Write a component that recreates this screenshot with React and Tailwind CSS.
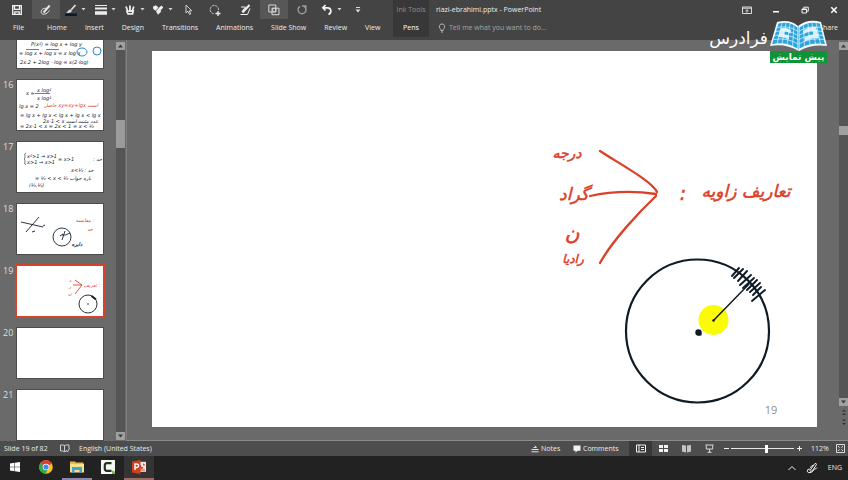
import { useState } from "react";
import clsx from "clsx";

const tabs = ["File", "Home", "Insert", "Design", "Transitions", "Animations", "Slide Show", "Review", "View"];

function Caret() {
  return (
    <svg viewBox="0 0 5 3" className="w-[5px] h-[3px]" fill="#d4d4d4">
      <path d="M.5 0h4L2.500 2.500z" />
    </svg>
  );
}

function SaveIcon() {
  return (
    <svg viewBox="0 0 12 12" className="w-3 h-3" fill="none" stroke="#f2f2f2" strokeWidth="1.3">
      <path d="M1.7 1.7h8.6v8.6H1.7z M3.5 1.7v3.6h5V1.7 M3.8 10.3V7.8h4.4v2.5" />
    </svg>
  );
}

function InkPenIcon() {
  return (
    <svg viewBox="0 0 12 12" className="w-3 h-3" fill="none" stroke="#e6e6e6">
      <path d="M3.5 8.5L9.7 1.5" strokeWidth="2" />
      <path d="M7.5 4.5C3 3.500 .8 6 1.2 8.300C2 11.500 7 10.500 9.500 6.500" strokeWidth="1" />
    </svg>
  );
}

function PenColorIcon() {
  return (
    <svg viewBox="0 0 12 12" className="w-3 h-3">
      <path d="M1 8.500C3 8 3 6 5 5.500L7 7C6 9 3 9.500 1 8.500z" fill="#dcdcdc" />
      <path d="M6 6L10.500 1" stroke="#dcdcdc" strokeWidth="1.800" />
      <path d="M0 9.500h12V12H0z" fill="#0b1b26" />
    </svg>
  );
}

function ThicknessIcon() {
  return (
    <svg viewBox="0 0 12 12" className="w-3 h-3" fill="#ededed">
      <path d="M0 1h12v1H0z M0 3.500h12v2H0z M0 7.300h12v3.500H0z" />
    </svg>
  );
}

function PensIcon() {
  return (
    <svg viewBox="0 0 12 12" className="w-3 h-3" fill="none" stroke="#ededed">
      <path d="M2 2.500L4 8 M6 1.500V8 M9.800 2.500L8 8" strokeWidth="1.800" />
      <path d="M2.500 6.500L4 9.800h4.500L9.500 6 M4.500 7h3.500" strokeWidth="1.800" />
    </svg>
  );
}

function EraserIcon() {
  return (
    <svg viewBox="0 0 12 12" className="w-3 h-3" fill="#ededed">
      <path d="M1 2.500L4 1.200l2.300 2.300L3.800 6.800 1.200 5z M6.500 4L9.500 1.500l1.800 2L8.200 7z M4 7.200l2.500-3 2.800 3.300-3.300 3.300z" />
    </svg>
  );
}

function CursorIcon() {
  return (
    <svg viewBox="0 0 12 12" className="w-3 h-3" fill="none" stroke="#d0d0d0">
      <path d="M4 1v8l2-1.800 1.500 3.300 1.300-.6L7.300 6.800h2.500z" />
    </svg>
  );
}

function LassoIcon() {
  return (
    <svg viewBox="0 0 12 12" className="w-3 h-3" fill="none" stroke="#c8c8c8">
      <path d="M9.500 6A4.200 4.200 0 1 0 5 9.800" strokeDasharray="2.500 .8" />
      <path d="M9 7v5 M6.500 9.500h5" stroke="#f2f2f2" strokeWidth="1.300" />
    </svg>
  );
}

function InkToTextIcon() {
  return (
    <svg viewBox="0 0 12 12" className="w-3 h-3" fill="none" stroke="#f2f2f2">
      <path d="M3.500 8.500L10.500 1" strokeWidth="2" />
      <path d="M2 3h4.500L3 7.500M1.500 10.500h7L11 4.500" strokeWidth="1" />
    </svg>
  );
}

function ShapesIcon() {
  return (
    <svg viewBox="0 0 12 12" className="w-3 h-3" fill="none" stroke="#d8d8d8">
      <path d="M.8 1h7v7h-7z M4 4.200h7v6.500H4z" />
      <circle cx="6.300" cy="6" r="1.800" />
    </svg>
  );
}

function RedoIcon() {
  return (
    <svg viewBox="0 0 12 12" className="w-3 h-3" fill="none" stroke="#9c9c9c" strokeWidth="1.400">
      <path d="M4 2.300A4 4 0 1 0 8.500 2.600 M6 2h3.800v3.500" />
    </svg>
  );
}

function UndoIcon() {
  return (
    <svg viewBox="0 0 12 12" className="w-3 h-3" fill="none" stroke="#f5f5f5" strokeWidth="1.700">
      <path d="M4.500 1L1.800 3.800l2.700 2.700 M2 3.800h4.500c4 0 4.500 5 1 6.700" />
    </svg>
  );
}

function CustomizeIcon() {
  return (
    <svg viewBox="0 0 6 6" className="w-1.5 h-1.5" fill="#dcdcdc">
      <path d="M1 0h4v1H1z M.5 2.500h5L3 5.500z" />
    </svg>
  );
}

const quickTools = [
  { name: "Save", icon: SaveIcon, width: "w-[30px]" },
  { name: "Draw", icon: InkPenIcon, width: "w-7", active: true },
  { name: "Pen color", icon: PenColorIcon, width: "w-[30px]", menu: true },
  { name: "Thickness", icon: ThicknessIcon, width: "w-[30px]", menu: true },
  { name: "Pens", icon: PensIcon, width: "w-7", menu: true },
  { name: "Eraser", icon: EraserIcon, width: "w-7", menu: true },
  { name: "Select objects", icon: CursorIcon, width: "w-6" },
  { name: "Lasso select", icon: LassoIcon, width: "w-[30px]" },
  { name: "Ink to text", icon: InkToTextIcon, width: "w-[30px]" },
  { name: "Convert to shapes", icon: ShapesIcon, width: "w-7", active: true },
  { name: "Redo", icon: RedoIcon, width: "w-7" },
  { name: "Undo", icon: UndoIcon, width: "w-[30px]", menu: true },
  { name: "Customize toolbar", icon: CustomizeIcon, width: "w-6" },
];

function WindowControls() {
  const cell = "w-[29px] h-full flex items-center justify-center";
  return (
    <div className="ml-auto flex h-full">
      <button aria-label="Ribbon display options" className={cell}>
        <svg viewBox="0 0 10 8" className="w-[10px] h-2" fill="none" stroke="#dcdcdc">
          <path d="M.5 1h9v6.500h-9z M.5 2.200h9 M5 6.500V4 M3.500 5L5 3.700 6.500 5" />
        </svg>
      </button>
      <button aria-label="Minimize" className={cell}>
        <svg viewBox="0 0 8 8" className="w-2 h-2" fill="#fff">
          <path d="M1 5h6v1.500H1z" />
        </svg>
      </button>
      <button aria-label="Restore" className={cell}>
        <svg viewBox="0 0 8 8" className="w-2 h-2" fill="none" stroke="#f0f0f0">
          <path d="M1 3h4.500v4H1z M2.800 3V1.200h4.500v4H5.500 M1 3.500h4.500" />
        </svg>
      </button>
      <button aria-label="Close" className={cell}>
        <svg viewBox="0 0 8 8" className="w-2 h-2" stroke="#fff" strokeWidth="1.600">
          <path d="M1.300 1.300l5.400 5.400M6.700 1.300L1.300 6.700" />
        </svg>
      </button>
    </div>
  );
}

function Brand() {
  return (
    <div className="absolute right-[21px] top-5 flex items-start gap-0.5">
      <span className="text-[17px] leading-9 text-white font-['DejaVu_Sans',sans-serif]" dir="rtl">
        فرادرس
      </span>
      <div className="w-[57px]">
        <svg viewBox="0 0 57 31" className="w-full block">
          <path d="M7 2Q20-1 28 6Q38-2 51 2L57 26Q42 24 29 31Q15 23 0 26z" fill="#f4fbff" />
          <path d="M8.500 3.500Q20 1 27.500 7.500V28.500Q15 21 2 24.300z" fill="#2ba4dc" />
          <path d="M29.500 7.500Q38 1 49.800 3.500L55 24.300Q42 21.500 29.500 28.500z" fill="#2ba4dc" />
          <g fill="#d9f0fb">
            <path d="M11 8q5-1 10 2l-.5 3.500q-4-2.500-6-2l-.5 3q3 0 5 1.500v3.500q-5-3-11-2.500z" />
            <path d="M33 11q5-4.500 13-4l3 11q-8-.5-14 3.500l-.5-4q4-2.500 9-3l-1-3.500q-5 0-9 3.500z" />
          </g>
          <g fill="none" stroke="#e6f6fd" strokeWidth=".7">
            <path d="M7 7.500Q19 5 28 11.500M6 11.500Q18 9 28 15.500M5 15.500Q17 13 28 19.500M4 19.500Q16 17 28 24" />
            <path d="M29 11.500Q38 5 51 7.500M29 15.500Q39 9 52 11.500M29 19.500Q40 13 53 15.500M29 24Q41 17 54 19.500" />
            <path d="M12 3L7 24M16 3L12 24M20 4L17 25M24 5.500L22.500 27" />
            <path d="M46 3L50.500 24M42 3L45.500 24M38 4L40 25M33.500 5.500L34.500 27" />
          </g>
          <path d="M28.500 6v24" stroke="#8acbea" />
        </svg>
        <p
          className="bg-[#0d9438] text-white text-center font-bold text-[9px] leading-3 whitespace-nowrap font-['DejaVu_Sans',sans-serif]"
          dir="rtl"
        >
          پیش نمایش
        </p>
      </div>
    </div>
  );
}

function Header() {
  return (
    <header className="relative z-10 flex bg-[#444444] h-10 shrink-0">
      <div className="w-[393px] shrink-0">
        <div className="flex h-[19px] pl-0.5">
          {quickTools.map(({ name, icon: Icon, width, active, menu }) => (
            <button
              key={name}
              aria-label={name}
              className={clsx("flex items-center justify-center gap-1 h-full", width, active && "bg-[#575757]")}
            >
              <Icon />
              {menu && <Caret />}
            </button>
          ))}
        </div>
        <nav className="flex h-[18px] pl-1">
          {tabs.map((tab) => (
            <button key={tab} className="px-[9px] first:pr-[14px] whitespace-nowrap">
              {tab}
            </button>
          ))}
        </nav>
      </div>

      <div className="w-9 h-[37px] shrink-0 bg-[#383838] flex flex-col">
        <span className="h-[19px] leading-[19px] text-center text-[#8f8f8f] whitespace-nowrap">Ink Tools</span>
        <button className="h-[18px] text-white">Pens</button>
      </div>

      <div className="flex-1 min-w-0">
        <div className="flex items-center h-[19px] pl-[7px]">
          <h1 className="whitespace-nowrap">riazi-ebrahimi.pptx - PowerPoint</h1>
          <WindowControls />
        </div>
        <div className="flex items-center h-[18px] pl-[9px] pr-[10px]">
          <label className="flex flex-1 items-center gap-[3px]">
            <svg viewBox="0 0 8 10" className="w-2 h-[10px]" fill="none" stroke="#b8b8b8">
              <path d="M2.800 6.500C.5 4.500 1 1 4 1s3.500 3.500 1.200 5.500v1H2.800z M3 9h2" />
            </svg>
            <input
              aria-label="Tell me what you want to do"
              placeholder="Tell me what you want to do..."
              className="w-28 bg-transparent outline-none placeholder:text-[#a4a4a4]"
            />
          </label>
          <button>Share</button>
        </div>
      </div>

      <Brand />
    </header>
  );
}

const inkText = "font-['DejaVu_Sans',sans-serif] italic";

function LogSlide() {
  return (
    <g className={inkText} fill="#15202c" fontSize="5">
      <text x="14" y="28">P(x²) = log x + log y</text>
      <text x="2" y="37">= log x + log x = x log x</text>
      <text x="3" y="46">2x.2 + 2log - log = x(2-log)</text>
      <g fill="none" stroke="#2d86c9">
        <ellipse cx="65" cy="34" rx="5" ry="4" />
        <ellipse cx="80" cy="33" rx="4" ry="4" />
        <path d="M9 31.500h13M29 31.500h13" stroke="#15202c" strokeWidth=".6" />
      </g>
    </g>
  );
}

function FractionSlide() {
  return (
    <g className={inkText} fill="#15202c" fontSize="5">
      <text x="9" y="15">x =</text>
      <text x="20" y="12">x log²</text>
      <text x="20" y="20">x log²</text>
      <path d="M18 13.500h15" stroke="#15202c" strokeWidth=".6" />
      <text x="2" y="28">lg x = 2</text>
      <text x="54" y="27" fill="#e0412f" textAnchor="middle">حاصل xy=xy+lgx است</text>
      <text x="3" y="37">= lg x + lg x &lt; lg x + lg x &lt; lg x</text>
      <text x="26" y="43">2x-1 &lt; x عدد مثبت است</text>
      <text x="3" y="48">= 2x-1 &lt; x = 2x &lt; 1 = x &lt; ½</text>
    </g>
  );
}

function SystemSlide() {
  return (
    <g className={inkText} fill="#15202c" fontSize="5">
      <text x="10" y="16">x²&gt;1 → x&gt;1</text>
      <text x="10" y="22">x&gt;1 → x&gt;1</text>
      <path d="M9 11q-2 0-1 4q0 2-1 2q1 0 1 2q-1 4 1 4" fill="none" stroke="#15202c" strokeWidth=".6" />
      <text x="41" y="19">= x&gt;1</text>
      <text x="76" y="19">: حد</text>
      <text x="54" y="30">x&lt;½ : حد</text>
      <text x="18" y="38">= ½ &lt; x &lt; ½ بازه جواب</text>
      <text x="12" y="45">(½,½)</text>
    </g>
  );
}

function CompareSlide() {
  return (
    <g fill="none" stroke="#15202c" strokeWidth=".9">
      <path d="M4 18L26 23 M22 13L9 28 M26 22l2-1 M15 28l3-1" />
      <circle cx="45" cy="33" r="9" />
      <path d="M45 36L48 27 M45 31q3 1 8-2 M43 32l3-2" />
      <g className={inkText} stroke="none" fontSize="5">
        <text x="60" y="42" fill="#15202c" textAnchor="middle" fontWeight="bold">دایره</text>
        <text x="68" y="18" fill="#e0412f" textAnchor="middle">مقایسه :</text>
        <text x="73" y="27" fill="#e0412f" textAnchor="middle">حد</text>
      </g>
    </g>
  );
}

function AngleThumb() {
  return (
    <g fill="none" strokeWidth=".9">
      <path d="M58 14L65 19L58 28M56 19h9" stroke="#e0412f" />
      <g className={inkText} fill="#e0412f" fontSize="5">
        <text x="53" y="16" textAnchor="middle">د</text>
        <text x="53" y="22" textAnchor="middle">ر</text>
        <text x="53" y="29" textAnchor="middle">ن</text>
        <text x="75" y="21" textAnchor="middle">تعریف :</text>
      </g>
      <circle cx="71" cy="38" r="9" stroke="#15202c" />
      <path d="M74.500 30L79 33.500" stroke="#15202c" strokeWidth="2" />
      <circle cx="71" cy="38" r=".8" fill="#15202c" />
    </g>
  );
}

const slides = [
  { no: 15, content: LogSlide },
  { no: 16, content: FractionSlide },
  { no: 17, content: SystemSlide },
  { no: 18, content: CompareSlide },
  { no: 19, content: AngleThumb },
  { no: 20 },
  { no: 21 },
];

function ArrowButton({ label, path }) {
  return (
    <button aria-label={label} className="w-[9px] h-2 bg-[#a0a0a0] flex items-center justify-center">
      <svg viewBox="0 0 5 4" className="w-[5px] h-1" fill="#3a3a3a">
        <path d={path} />
      </svg>
    </button>
  );
}

const up = "M0 3.500h5L2.500 .5z";
const down = "M0 .5h5L2.500 3.500z";

function SlidePanel({ current, onSelect }) {
  return (
    <aside className="flex shrink-0 border-r border-[#808080]">
      <ol className="w-[116px] pl-[3px] pb-px flex flex-col justify-end gap-3 overflow-hidden">
        {slides.map(({ no, content: Content }) => (
          <li key={no} className="shrink-0">
            <button onClick={() => onSelect(no)} className="flex text-left">
              <span className="w-3.5 text-[9px] leading-[9px] text-[#dedede]">{no}</span>
              <span
                className={clsx(
                  "w-[86px] h-[50px] bg-white outline",
                  no === current ? "outline-2 outline-[#d5432b]" : "outline-1 outline-[#4c4c4c]"
                )}
              >
                <svg viewBox="0 0 86 50" className="w-full h-full block">
                  {Content && <Content />}
                </svg>
              </span>
            </button>
          </li>
        ))}
      </ol>
      <div className="flex flex-col pt-0.5 pb-px pr-px">
        <ArrowButton label="Scroll up" path={up} />
        <div className="flex-1 bg-[#555555] flex flex-col">
          <div className="grow-[70]" />
          <div className="h-7 bg-[#9b9b9b]" />
          <div className="grow-[284]" />
        </div>
        <ArrowButton label="Scroll down" path={down} />
      </div>
    </aside>
  );
}

const ticks = [
  "M580 225L587 217",
  "M582 227L591 218",
  "M586 230L595 220",
  "M588 234L599 224",
  "M591 237L602 227",
  "M595 239L605 229",
  "M598 241L608 232",
  "M601 244L609 236",
  "M600 250L613 239",
];

function AngleSlide() {
  return (
    <svg viewBox="0 0 665 376" className="w-full h-full block" role="img" aria-label="Slide 19">
      <g fill="none" stroke="#dc4029" strokeWidth="2.300" strokeLinecap="round">
        <path d="M448 100C466 112 500 130 505 141" />
        <path d="M438 145Q470 138 504 143" />
        <path d="M504 145C488 160 460 190 448 212" />
      </g>
      <g className={inkText} fill="#dc4029" stroke="#dc4029" strokeWidth=".5" textAnchor="middle">
        <text x="415" y="107" fontSize="14">درجه</text>
        <text x="422" y="149" fontSize="17">گراد</text>
        <text x="420" y="189" fontSize="20">ن</text>
        <text x="421" y="212" fontSize="12">رادیا</text>
        <text x="594" y="146" fontSize="17">تعاریف زاویه</text>
        <text x="531" y="149" fontSize="19">:</text>
      </g>

      <circle cx="561.500" cy="269" r="15" fill="#fbfb05" />
      <g fill="none" stroke="#0f1b24" strokeLinecap="round">
        <circle cx="545.500" cy="280" r="71.500" strokeWidth="2.200" />
        <path d="M561.500 269.500L597 233" strokeWidth="1.500" />
        {ticks.map((d) => (
          <path key={d} d={d} strokeWidth="1.900" />
        ))}
      </g>
      <circle cx="546.500" cy="281.500" r="3.200" fill="#0f1b24" />
      <path d="M546 284.500h3.500v-3z" fill="#0f1b24" />
      <circle cx="561.500" cy="269.500" r="1.200" fill="#0f1b24" />
      <text x="619" y="363" textAnchor="middle" fontSize="11" fill="#8c8c8c" className="font-['Open_Sans',sans-serif]">
        19
      </text>
    </svg>
  );
}

function SlideArea() {
  return (
    <main className="flex flex-1 min-w-0 border-b border-[#8a8a8a]">
      <div className="flex-1 min-w-0 pl-[25px] pr-[22px] pt-[11px] pb-[13px]">
        <div className="h-full bg-white">
          <AngleSlide />
        </div>
      </div>
      <div className="flex flex-col pt-0.5">
        <ArrowButton label="Previous page" path={up} />
        <div className="flex-1 bg-[#555555] flex flex-col">
          <div className="grow-[76]" />
          <div className="h-[9px] bg-[#a0a0a0]" />
          <div className="grow-[262]" />
        </div>
        <ArrowButton label="Next page" path={down} />
        <div className="flex flex-col items-center gap-0.5 pt-0.5 pb-[14px]">
          <button aria-label="Previous slide">
            <svg viewBox="0 0 6 8" className="w-1.5 h-2 block" fill="#303030">
              <path d="M1 3.500l2-2 2 2z M1 7l2-2 2 2z" />
            </svg>
          </button>
          <button aria-label="Next slide">
            <svg viewBox="0 0 6 8" className="w-1.5 h-2 block" fill="#303030">
              <path d="M1 1.500l2 2 2-2z M1 5l2 2 2-2z" />
            </svg>
          </button>
        </div>
      </div>
    </main>
  );
}

function StatusBar({ current, zoom, onZoom }) {
  const view = "w-[23px] h-full flex items-center justify-center";
  return (
    <footer className="flex items-center h-[15px] shrink-0 bg-[#4d4d4d] pl-1 pr-[3px] whitespace-nowrap">
      <span className="w-14">Slide {current} of 82</span>
      <button aria-label="Spelling" className="w-[19px]">
        <svg viewBox="0 0 10 9" className="w-[10px] h-[9px]" fill="none" stroke="#cfcfcf">
          <path d="M4.500 1.500Q2.500.5.5 1v6q2-.5 4 .7zM4.500 1.500Q7 .5 9 1v3M4.500 7.700l1.500-.5M6 6l1.500 2L9.500 4" />
        </svg>
      </button>
      <button>English (United States)</button>

      <div className="ml-auto flex items-center h-full">
        <button className="flex items-center gap-0.5 w-[42px]">
          <svg viewBox="0 0 8 8" className="w-2 h-2" fill="none" stroke="#e0e0e0">
            <path d="M.5 4.500h7M.5 6.800h7M2.500 2.500h3M4 .8L5.500 2.500" />
          </svg>
          Notes
        </button>
        <button className="flex items-center gap-0.5 w-14">
          <svg viewBox="0 0 8 8" className="w-2 h-2" fill="#f2f2f2">
            <path d="M.5.5h7v5.200H4.500L2.500 7.800V5.700h-2z" />
          </svg>
          Comments
        </button>
        <button aria-label="Normal view" className={clsx(view, "bg-[#383838]")}>
          <svg viewBox="0 0 10 9" className="w-[10px] h-[9px]" fill="none" stroke="#f2f2f2">
            <path d="M.5 1h9v7h-9z M3 1v7 M5 3.500h3 M5 5.500h3" />
          </svg>
        </button>
        <button aria-label="Slide sorter" className={view}>
          <svg viewBox="0 0 9 9" className="w-[9px] h-[9px]" fill="#f2f2f2">
            <path d="M0 1h4v3H0zM5 1h4v3H5zM0 5h4v3H0zM5 5h4v3H5z" />
          </svg>
        </button>
        <button aria-label="Reading view" className={view}>
          <svg viewBox="0 0 9 9" className="w-[9px] h-[9px]" fill="#c4c4c4">
            <path d="M0 1l4 .6V8.500L0 7.500zM5 1.600L9 1v6.500L5 8.500z" />
          </svg>
        </button>
        <button aria-label="Slide show" className={view}>
          <svg viewBox="0 0 9 9" className="w-[9px] h-[9px]" fill="none" stroke="#dadada">
            <path d="M.3 1h8.400M1.300 1.500v3.500h6.400V1.500M4.500 5v3M2.500 8.300h4" />
          </svg>
        </button>
        <button aria-label="Zoom out" className="w-2.5 flex items-center justify-center">
          <svg viewBox="0 0 5 5" className="w-[5px] h-[5px]" stroke="#f2f2f2">
            <path d="M0 2.500h5" />
          </svg>
        </button>
        <input
          type="range"
          aria-label="Zoom"
          min="10"
          max="190"
          value={zoom}
          onChange={(e) => onZoom(Number(e.target.value))}
          className="w-[63px] h-px appearance-none bg-[#e6e6e6] [&::-webkit-slider-thumb]:appearance-none [&::-webkit-slider-thumb]:w-[3px] [&::-webkit-slider-thumb]:h-2 [&::-webkit-slider-thumb]:bg-white"
        />
        <button aria-label="Zoom in" className="w-2.5 flex items-center justify-center">
          <svg viewBox="0 0 5 5" className="w-[5px] h-[5px]" stroke="#f2f2f2">
            <path d="M0 2.500h5M2.500 0v5" />
          </svg>
        </button>
        <span className="w-8 text-center">{zoom}%</span>
        <button aria-label="Fit to window">
          <svg viewBox="0 0 9 9" className="w-[9px] h-[9px] block" fill="none" stroke="#dadada">
            <path d="M.5.5h8v8h-8z M2 2l1.700 1.700M7 2L5.300 3.700M2 7l1.700-1.700M7 7L5.300 5.300" />
          </svg>
        </button>
      </div>
    </footer>
  );
}

function Taskbar() {
  const item = "w-[30px] h-full flex items-center justify-center border-b-2";
  return (
    <div className="flex items-center h-6 shrink-0 bg-[#222222]">
      <div className="flex h-full gap-px">
        <button aria-label="Start" className={clsx(item, "border-transparent")}>
          <svg viewBox="0 0 10 10" className="w-[10px] h-[10px]" fill="#fff">
            <path d="M0 1.400L4.500.8v4H0zM5 .7L10 0v4.800H5zM0 5.300h4.500v4L0 8.600zM5 5.300h5V10l-5-.7z" />
          </svg>
        </button>
        <button aria-label="Chrome" className={clsx(item, "border-transparent")}>
          <svg viewBox="0 0 14 14" className="w-3.5 h-3.5">
            <circle cx="7" cy="7" r="6.800" fill="#fbc116" />
            <path d="M7 7L1.100 3.600A6.800 6.800 0 0 1 12.900 3.600z" fill="#e33b2e" />
            <path d="M7 7L1.100 3.600A6.800 6.800 0 0 0 6.300 13.800L9.500 8.500z" fill="#2da94f" />
            <circle cx="7" cy="7" r="3.300" fill="#fff" />
            <circle cx="7" cy="7" r="2.600" fill="#4285f4" />
          </svg>
        </button>
        <button aria-label="File Explorer" className={clsx(item, "border-[#8d86a8]")}>
          <svg viewBox="0 0 14 12" className="w-3.5 h-3">
            <path d="M0 .5h5l1 1h7.500V11H0z" fill="#e8b84a" />
            <path d="M0 3h14v8.500H0z" fill="#fbe08a" />
            <path d="M2 6h10v5.500H9.500V9h-5v2.500H2z" fill="#3fa7d8" />
          </svg>
        </button>
        <button aria-label="Camtasia" className={clsx(item, "border-transparent")}>
          <svg viewBox="0 0 14 14" className="w-3.5 h-3.5">
            <path d="M0 0h14v14H0z" fill="#f5f8f2" />
            <path d="M10.500 3.200H6Q3.800 3.200 3.800 5.500v3Q3.800 10.800 6 10.800h4.500" fill="none" stroke="#22311d" strokeWidth="2.200" />
            <path d="M11 10.500l3 1V14h-3z" fill="#7fb94a" />
          </svg>
        </button>
        <button aria-label="PowerPoint" className={clsx(item, "bg-[#343434] border-[#9c6b63]")}>
          <svg viewBox="0 0 14 14" className="w-3.5 h-3.5">
            <path d="M7 1.800h7v10H7z" fill="#f8e6e0" />
            <path d="M9 5a2 2 0 1 0 2.500 2H9.500z M8 9.500h5v1H8z M11 3.500a2 2 0 0 1 2 2h-2z" fill="#d34a2c" />
            <path d="M0 1.500L8.500 0v14L0 12.500z" fill="#d0401f" />
            <path d="M3 10V4h1.800a1.700 1.700 0 0 1 0 3.500H3" fill="none" stroke="#fff" strokeWidth="1.400" />
          </svg>
        </button>
      </div>
      <div className="ml-auto flex items-center gap-2.5 pr-1.5">
        <button aria-label="Show hidden icons">
          <svg viewBox="0 0 8 6" className="w-2 h-1.5 block" fill="none" stroke="#f0f0f0">
            <path d="M.5 5L4 1.500 7.500 5" />
          </svg>
        </button>
        <button aria-label="Windows Ink Workspace">
          <svg viewBox="0 0 12 12" className="w-3 h-3 block" fill="none" stroke="#f0f0f0">
            <path d="M4 8.500L8.500 2q2-1.500 2 .5L6.500 8.500 4.500 9.500z M7 3.500Q5 3.500 4.500 6 M4 7Q1 7 1.200 9.200T5 10.500Q7 9.500 8.500 7q2 0 2.500-1.500" />
          </svg>
        </button>
        <span>ENG</span>
      </div>
    </div>
  );
}

export default function App() {
  const [current, setCurrent] = useState(19);
  const [zoom, setZoom] = useState(112);

  return (
    <div className="h-screen flex flex-col bg-[#6a6a6a] text-[#ececec] text-[7px] leading-[10px] font-['Open_Sans','Noto_Sans',sans-serif] overflow-hidden">
      <Header />
      <div className="flex flex-1 min-h-0">
        <SlidePanel current={current} onSelect={setCurrent} />
        <SlideArea />
      </div>
      <StatusBar current={current} zoom={zoom} onZoom={setZoom} />
      <Taskbar />
    </div>
  );
}
